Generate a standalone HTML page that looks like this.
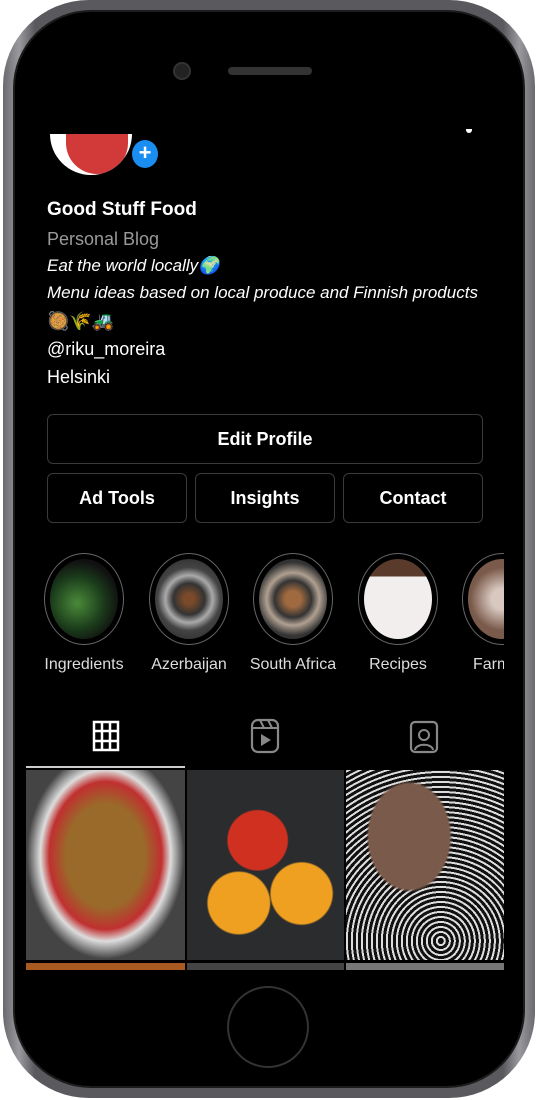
<!DOCTYPE html>
<html><head><meta charset="utf-8"><style>
*{margin:0;padding:0;box-sizing:border-box}
body{width:538px;height:1100px;background:#fff;position:relative;overflow:hidden;font-family:"Liberation Sans",sans-serif;color:#fff}
.phone{position:absolute;left:3px;top:0;width:532px;height:1098px;border-radius:86px;background:linear-gradient(90deg,#6a6a6e,#9a9a9e 3%,#5a5a5e 6%,#5a5a5e 94%,#9a9a9e 97%,#6a6a6e)}
.inner{position:absolute;left:10px;top:10px;width:512px;height:1078px;border-radius:78px;background:#000;border:2px solid #1c1c1c}
.a{position:absolute}
.txt{font-size:18px;line-height:28px}
.btn{position:absolute;border:1px solid #3a3a3a;border-radius:6px;font-weight:bold;font-size:18px;text-align:center;line-height:48px;height:50px}
.st{position:absolute;width:80px;height:92px;top:553px;border-radius:50%;border:1.5px solid #666}
.st div{position:absolute;left:5px;top:5px;right:5px;bottom:5px;border-radius:50%}
.lbl{position:absolute;top:656px;font-size:16px;color:#ddd;text-align:center;width:110px}
.g{position:absolute}
</style></head><body>
<div class="phone"><div class="inner"></div></div>
<div class="a" style="left:173px;top:62px;width:18px;height:18px;border-radius:50%;background:#222;border:2px solid #333"></div>
<div class="a" style="left:228px;top:67px;width:84px;height:8px;border-radius:4px;background:#333"></div>
<div class="a" style="left:50px;top:134px;width:82px;height:41px;border-radius:0 0 41px 41px;background:#fff;overflow:hidden"><div style="position:absolute;left:16px;top:0;width:62px;height:40px;border-radius:0 0 34px 34px;background:#d23a3a"></div></div>
<div class="a" style="left:130px;top:138px;width:30px;height:32px;border-radius:50%;background:#1a8ef0;border:2px solid #000;font-size:22px;font-weight:bold;text-align:center;line-height:26px">+</div>
<div class="a" style="left:466px;top:129px;width:6px;height:4px;border-radius:0 0 3px 3px;background:#fff"></div>
<div class="a txt" style="left:47px;top:196px;font-weight:bold;font-size:19px">Good Stuff Food</div>
<div class="a txt" style="left:47px;top:225px;color:#9a9a9a">Personal Blog</div>
<div class="a txt" style="left:47px;top:252px;font-style:italic;font-size:17px">Eat the world locally🌍</div>
<div class="a txt" style="left:47px;top:279px;font-style:italic;font-size:17px">Menu ideas based on local produce and Finnish products</div>
<div class="a txt" style="left:47px;top:307px">🥘🌾🚜</div>
<div class="a txt" style="left:47px;top:335px">@riku_moreira</div>
<div class="a txt" style="left:47px;top:363px">Helsinki</div>
<div class="btn" style="left:47px;top:414px;width:436px">Edit Profile</div>
<div class="btn" style="left:47px;top:473px;width:140px">Ad Tools</div>
<div class="btn" style="left:195px;top:473px;width:140px">Insights</div>
<div class="btn" style="left:343px;top:473px;width:140px">Contact</div>
<div class="st" style="left:44px"><div style="background:radial-gradient(circle at 40% 55%,#4a8a3a,#1a3a1a 45%,#111 70%)"></div></div>
<div class="st" style="left:149px"><div style="background:radial-gradient(circle,#7a4a2a 10%,#333 30%,#aaa 45%,#444 60%,#222)"></div></div>
<div class="st" style="left:253px"><div style="background:radial-gradient(circle,#a06a40 15%,#333 35%,#b0a090 50%,#333 70%)"></div></div>
<div class="st" style="left:358px"><div style="background:linear-gradient(#5a3a2a 0 22%,#f2eeee 22%)"></div></div>
<div class="a" style="left:462px;top:553px;width:42px;height:92px;overflow:hidden"><div style="width:80px;height:92px;border-radius:50%;border:1.5px solid #666;padding:5px"><div style="width:100%;height:100%;border-radius:50%;background:radial-gradient(circle,#d8c8c0 20%,#7a5a4a 60%)"></div></div></div>
<div class="lbl" style="left:29px">Ingredients</div>
<div class="lbl" style="left:134px">Azerbaijan</div>
<div class="lbl" style="left:238px">South Africa</div>
<div class="lbl" style="left:343px">Recipes</div>
<div class="a" style="left:473px;top:656px;font-size:16px;color:#ddd;width:31px;overflow:hidden;white-space:nowrap">Farm</div>
<svg class="a" style="left:92px;top:720px" width="28" height="32" viewBox="0 0 28 32"><rect x="2" y="2" width="24" height="28" fill="none" stroke="#fff" stroke-width="2.5"/><path d="M10 2V30M18 2V30M2 11H26M2 21H26" stroke="#fff" stroke-width="2.5"/></svg>
<svg class="a" style="left:250px;top:718px" width="30" height="36" viewBox="0 0 30 36"><rect x="2" y="2" width="26" height="32" rx="6" fill="none" stroke="#888" stroke-width="2.2"/><path d="M2 10H28M10 2L14 10M18 2L22 10" stroke="#888" stroke-width="2"/><path d="M11 16V28L21 22Z" fill="#888"/></svg>
<svg class="a" style="left:409px;top:718px" width="30" height="36" viewBox="0 0 30 36"><rect x="2" y="4" width="26" height="30" rx="4" fill="none" stroke="#888" stroke-width="2.2"/><circle cx="15" cy="17" r="5" fill="none" stroke="#888" stroke-width="2"/><path d="M6 32C7 25 23 25 24 32" fill="none" stroke="#888" stroke-width="2"/></svg>
<div class="a" style="left:26px;top:766px;width:159px;height:2px;background:#ccc"></div>
<div class="g" style="left:26px;top:770px;width:159px;height:190px;background:radial-gradient(ellipse at 50% 45%,#9a6a2a 0 35%,#c03030 50%,#ddd 58%,#444 70%)"></div>
<div class="g" style="left:187px;top:770px;width:157px;height:190px;background:radial-gradient(circle at 45% 37%,#d03020 0 20%,transparent 21%),radial-gradient(circle at 33% 70%,#f0a020 0 18%,transparent 19%),radial-gradient(circle at 73% 65%,#f0a020 0 18%,transparent 19%),#2a2c2e"></div>
<div class="g" style="left:346px;top:770px;width:158px;height:190px;background:radial-gradient(ellipse at 40% 35%,#7a5a4a 0 30%,transparent 32%),repeating-radial-gradient(circle at 60% 90%,#111 0 3px,#ddd 3px 5px)"></div>
<div class="g" style="left:26px;top:963px;width:159px;height:7px;background:#a85a20"></div>
<div class="g" style="left:187px;top:963px;width:157px;height:7px;background:#444"></div>
<div class="g" style="left:346px;top:963px;width:158px;height:7px;background:#777"></div>
<div class="a" style="left:227px;top:986px;width:82px;height:82px;border-radius:50%;border:2px solid #333"></div>
</body></html>
